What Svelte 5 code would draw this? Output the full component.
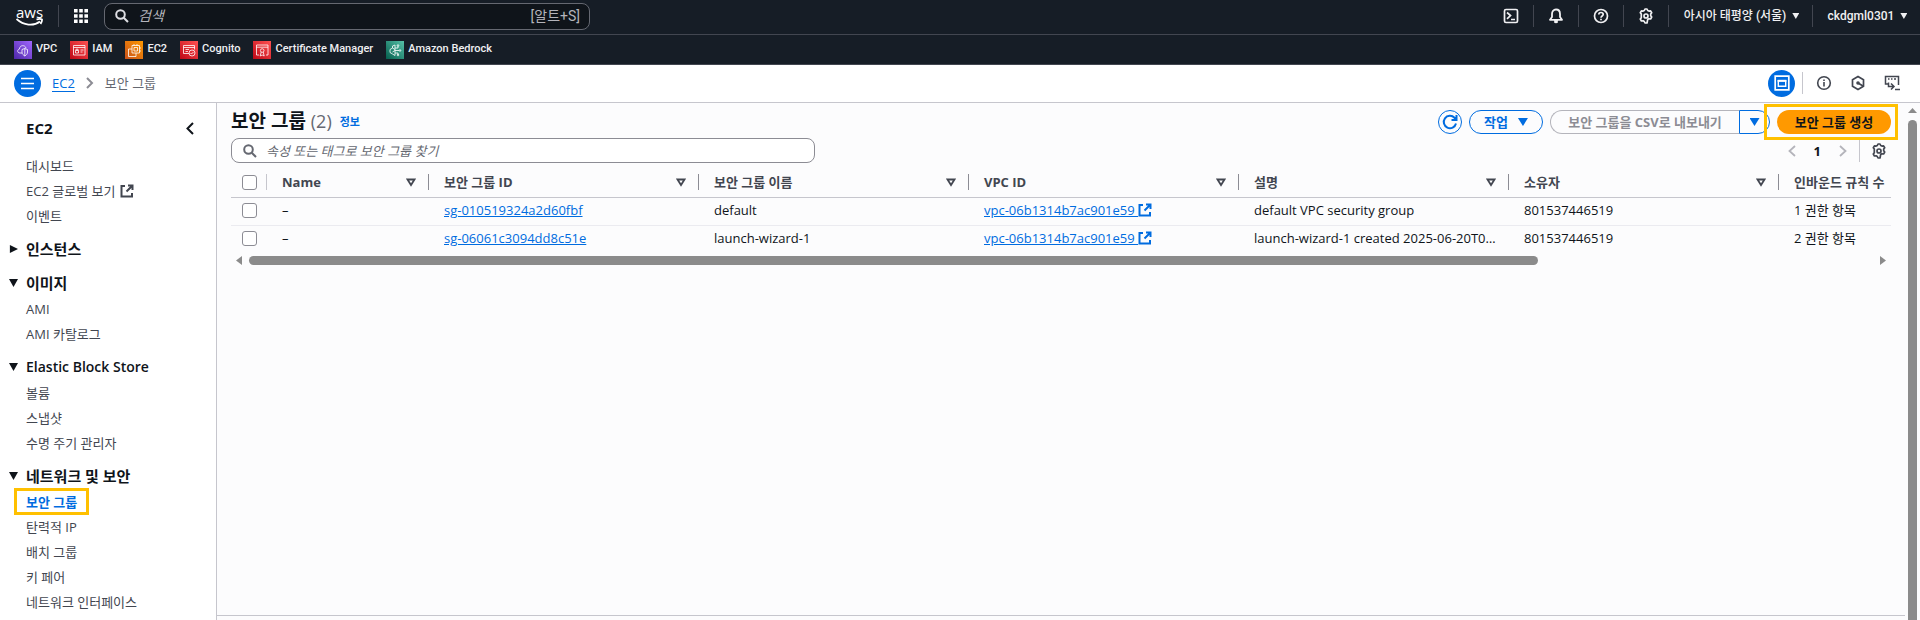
<script>
  const services = [
    { name: 'VPC', kind: 'vpc' },
    { name: 'IAM', kind: 'iam' },
    { name: 'EC2', kind: 'ec2' },
    { name: 'Cognito', kind: 'cognito' },
    { name: 'Certificate Manager', kind: 'cert' },
    { name: 'Amazon Bedrock', kind: 'bedrock' }
  ];
  const topItems = [
    { label: '대시보드' },
    { label: 'EC2 글로벌 보기', external: true },
    { label: '이벤트' }
  ];
  const sections = [
    { title: '인스턴스', lang: 'ko', open: false, items: [] },
    { title: '이미지', lang: 'ko', open: true, items: ['AMI', 'AMI 카탈로그'] },
    { title: 'Elastic Block Store', lang: 'en', open: true, items: ['볼륨', '스냅샷', '수명 주기 관리자'] },
    { title: '네트워크 및 보안', lang: 'ko', open: true, items: ['보안 그룹', '탄력적 IP', '배치 그룹', '키 페어', '네트워크 인터페이스'] }
  ];
  const columns = ['Name', '보안 그룹 ID', '보안 그룹 이름', 'VPC ID', '설명', '소유자'];
  const rows = [
    { id: 'sg-010519324a2d60fbf', name: 'default', vpc: 'vpc-06b1314b7ac901e59', desc: 'default VPC security group', owner: '801537446519', rules: '1 권한 항목' },
    { id: 'sg-06061c3094dd8c51e', name: 'launch-wizard-1', vpc: 'vpc-06b1314b7ac901e59', desc: 'launch-wizard-1 created 2025-06-20T0…', owner: '801537446519', rules: '2 권한 항목' }
  ];
</script>

{#snippet gear(size)}
  <svg width={size} height={size} viewBox="0 0 16 16" fill="none" stroke="currentColor" stroke-width="1.7" stroke-linejoin="round">
    <path d="M6.3 2.5 7 1h2l.7 1.5 1.2.6 1.700-.2 1.100 1.800-1 1.400v1.600l1 1.400-1.100 1.900-1.700-.2-1.200.7L9 15H7l-.7-1.500-1.200-.7-1.700.2-1.100-1.900 1-1.400V6.100l-1-1.400 1.100-1.800 1.700.2z" />
    <circle cx="8" cy="8" r="2" />
  </svg>
{/snippet}

{#snippet external()}
  <svg class="ext" width="14" height="14" viewBox="0 0 14 14" fill="none" stroke="currentColor" stroke-width="2">
    <path d="M5 2H1.500v10.500H12V9M8 1.500h4.500V6M12 2 6.500 7.500" />
  </svg>
{/snippet}

{#snippet magnifier()}
  <svg width="14" height="14" viewBox="0 0 14 14" fill="none" stroke="currentColor" stroke-width="2">
    <circle cx="5.500" cy="5.500" r="4.300" /><path d="m8.700 8.700 4.300 4.300" />
  </svg>
{/snippet}

<div class="page">
  <header>
    <div class="global">
      <a class="logo" href="#home" aria-label="AWS">
        <span>aws</span>
        <svg width="28" height="8" viewBox="0 0 28 8" fill="none" stroke="#fff" stroke-width="1.800"><path d="M.5 1c7 6.500 17 7.500 23.500 2.500M20.500 1.500c2.200-.7 4.500-.7 5.500 0 .2 1.500-.5 3-1.500 4.500" /></svg>
      </a>
      <button class="apps" aria-label="서비스">
        <svg width="14" height="14" viewBox="0 0 14 14" fill="#fff"><path d="M0 0h3.600v3.600H0zM5.200 0h3.600v3.600H5.200zM10.400 0H14v3.600h-3.600zM0 5.200h3.600v3.600H0zM5.200 5.200h3.600v3.600H5.200zM10.400 5.200H14v3.600h-3.600zM0 10.400h3.600V14H0zM5.200 10.400h3.600V14H5.200zM10.400 10.400H14V14h-3.600z" /></svg>
      </button>
      <label class="search dark">
        {@render magnifier()}
        <input type="text" placeholder="검색" aria-label="검색" />
        <span>[알트+S]</span>
      </label>
      <nav class="tools" aria-label="도구">
        <button class="tool" aria-label="CloudShell"><svg width="16" height="16" viewBox="0 0 16 16" fill="none" stroke="currentColor" stroke-width="1.700"><rect x="1.500" y="1.500" width="13" height="13" rx="1.500" /><path d="m4 4.500 3.500 3L4 10.800M8 11.500h4" /></svg></button>
        <button class="tool" aria-label="알림"><svg width="16" height="16" viewBox="0 0 16 16" fill="none" stroke="currentColor" stroke-width="1.800" stroke-linejoin="round"><path d="M2 11.800 4 9V6c0-2.500 1.500-4.500 4-4.500S12 3.500 12 6v3l2 2.800z" /><path d="M6 12h4c0 3.500-4 3.500-4 0z" fill="currentColor" stroke="none" /><path d="M6.500 13.500c1 1 2 1 3 0" /></svg></button>
        <button class="tool" aria-label="도움말"><svg width="16" height="16" viewBox="0 0 16 16" fill="none" stroke="currentColor" stroke-width="1.700"><circle cx="8" cy="8" r="6.500" /><path d="M5.800 6.500c0-2.700 4.400-2.700 4.400 0C10.200 8 8 8 8 9.700M8 10.800v1.500" /></svg></button>
        <button class="tool" aria-label="설정">{@render gear(16)}</button>
        <button class="region">아시아 태평양 (서울) <i class="tri"></i></button>
        <button class="user">ckdgml0301 <i class="tri"></i></button>
      </nav>
    </div>
    <nav class="favorites" aria-label="즐겨찾기">
      {#each services as s}
        <a href="#{s.kind}">
          <svg class="svc {s.kind}" width="18" height="18" viewBox="-1 0 18 18" fill="none" stroke="#fff" stroke-width="0.800">
            {#if s.kind === 'vpc'}
              <path d="M7 12H5C2 12 2 8.500 4.500 8 4.500 4 10 3.500 11 7" /><path d="M7 8.500 9.800 7.500l2.700 1v2.500c0 2-1.200 3-2.700 4-1.500-1-2.800-2-2.800-4zM9.800 7.500V15" />
            {:else if s.kind === 'iam'}
              <path d="M2.500 4.500h11.500v9.500H2.500zM2.500 6.500h11.500M9.500 9h3M9.500 11h2M4.500 9.500h3V12h-3zM5 9.500V8.200h2v1.300" />
            {:else if s.kind === 'ec2'}
              <path d="M6 4.500h7.500V12H6zM8 6.500h3.500V10H8zM8 4.500V3M11 4.500V3M6 8H2.500v7.500h7.500V12M13.500 7H15M13.500 10H15" />
            {:else if s.kind === 'cognito'}
              <path d="M8 12.500H2.500v-8h11v4M2.500 6.500h11M4.500 8.500h3.500M4.500 10.500h2.500" /><circle cx="11" cy="12" r="3" /><path d="m9.500 12 1 1 2-2" />
            {:else if s.kind === 'cert'}
              <path d="M5 14H2.500V4h11.500v10H12M2.500 6.200h11.500" /><circle cx="8.200" cy="9.500" r="1.800" /><path d="m7.200 11-1 4 2-1 2 1-1-4" />
            {:else}
              <path d="M8 4 5.500 5v2L3 8.500v3L5.500 13l2.500 1.500zM5.500 7 8 8.500M5.500 11 8 9.500M8 7h3V5M8 9.500h4M8 12h3v2" /><circle cx="11" cy="4.500" r=".8" /><circle cx="13" cy="9.500" r=".8" /><circle cx="11" cy="14" r=".8" />
            {/if}
          </svg>
          <span>{s.name}</span>
        </a>
      {/each}
    </nav>
  </header>

  <div class="crumbs">
    <button class="menu" aria-label="메뉴"><svg width="13" height="13" viewBox="0 0 13 13" stroke="#fff" stroke-width="1.600"><path d="M0 1.500h13M0 6.500h13M0 11.500h13" /></svg></button>
    <nav class="trail" aria-label="경로">
      <a href="#ec2">EC2</a>
      <svg width="8" height="12" viewBox="0 0 8 12" fill="none" stroke="#8c8c94" stroke-width="2"><path d="m1 1 5 5-5 5" /></svg>
      <span>보안 그룹</span>
    </nav>
    <div class="panels">
      <button class="split" aria-label="분할 패널"><svg width="16" height="16" viewBox="0 0 16 16" fill="none" stroke="#fff" stroke-width="1.700"><path d="M1.200 1.200h13.600v13.600H1.200z" /><path d="M4.300 5.800h7.400v5.400H4.300z" stroke-width="1.400" /><path d="M3.600 5.800h8.800" stroke-width="2" /></svg></button>
      <button aria-label="정보"><svg width="16" height="16" viewBox="0 0 16 16" fill="none" stroke="currentColor" stroke-width="1.600"><circle cx="8" cy="8" r="6.300" /><path d="M8 7v4.500M8 4.500V6" /></svg></button>
      <button aria-label="Q"><svg width="16" height="16" viewBox="0 0 16 16" fill="none" stroke="currentColor" stroke-width="1.700"><path d="m8 1.600 5.500 3.200v6.400L8 14.400l-5.500-3.200V4.800z" /><path d="m8 8 5 3" /><circle cx="8" cy="8" r="1.800" fill="currentColor" stroke="none" /></svg></button>
      <button aria-label="콘솔"><svg width="16" height="16" viewBox="0 0 16 16" fill="none" stroke="currentColor" stroke-width="1.500"><path d="M4 9H1.500V1.500h13V10M4 4h1.500M7 4h1.500M10 4h2M4.500 7.500v4h5M7 8.500l3 3-3 3M11 14.500h5" /></svg></button>
    </div>
  </div>

  <div class="body">
    <aside>
      <div class="side-title"><h2>EC2</h2><button aria-label="닫기"><svg width="8" height="13" viewBox="0 0 8 13" fill="none" stroke="#0f141a" stroke-width="2"><path d="M7 1 1.500 6.500 7 12" /></svg></button></div>
      <ul class="first">
        {#each topItems as t}
          <li><a href="#{t.label}">{t.label}{#if t.external}{@render external()}{/if}</a></li>
        {/each}
      </ul>
      {#each sections as s}
        <section>
          <button class="fold" lang={s.lang} aria-expanded={s.open}><i class:open={s.open}></i>{s.title}</button>
          {#if s.open}
            <ul>
              {#each s.items as item}
                <li><a href="#{item}" class:current={item === '보안 그룹'}>{item}</a></li>
              {/each}
            </ul>
          {/if}
        </section>
      {/each}
    </aside>

    <main>
      <div class="content">
        <div class="heading">
          <h1>보안 그룹 <span>(2)</span></h1>
          <a href="#info">정보</a>
          <div class="actions">
            <button class="round" aria-label="새로 고침"><svg width="16" height="16" viewBox="0 0 16 16" fill="none" stroke="currentColor" stroke-width="2"><path d="M14 9.500A6.200 6.200 0 1 1 12.500 3.800L14.500 6M14.500 1v5h-5" /></svg></button>
            <button class="pill">작업 <i class="tri big"></i></button>
            <div class="group"><button class="export" disabled>보안 그룹을 CSV로 내보내기</button><button class="more" aria-label="내보내기 옵션"><i class="tri big"></i></button></div>
            <div class="mark"><button class="create">보안 그룹 생성</button></div>
          </div>
        </div>
        <div class="filter">
          <label class="search light">
            {@render magnifier()}
            <input type="text" placeholder="속성 또는 태그로 보안 그룹 찾기" aria-label="보안 그룹 찾기" />
          </label>
          <div class="pager">
            <button aria-label="이전"><svg width="8" height="12" viewBox="0 0 8 12" fill="none" stroke="#b4b4bb" stroke-width="1.800"><path d="M7 1 1.500 6 7 11" /></svg></button>
            <b>1</b>
            <button aria-label="다음"><svg width="8" height="12" viewBox="0 0 8 12" fill="none" stroke="#b4b4bb" stroke-width="1.800"><path d="m1 1 5.500 5L1 11" /></svg></button>
            <button class="prefs" aria-label="기본 설정">{@render gear(16)}</button>
          </div>
        </div>
        <table>
          <thead>
            <tr>
              <th class="pick"><div><input type="checkbox" aria-label="모두 선택" /></div></th>
              {#each columns as c, i}
                <th class:name={i === 0} class:wide={i > 0}><div>{c}<svg width="10" height="9" viewBox="0 0 10 9" fill="none" stroke="currentColor" stroke-width="1.800"><path d="M1.500 1.500h7L5 7z" /></svg></div></th>
              {/each}
              <th class="last"><div>인바운드 규칙 수</div></th>
            </tr>
          </thead>
          <tbody>
            {#each rows as r}
              <tr>
                <td class="pick"><input type="checkbox" aria-label={r.id} /></td>
                <td>–</td>
                <td><a href="#{r.id}">{r.id}</a></td>
                <td>{r.name}</td>
                <td><a href="#{r.vpc}">{r.vpc} {@render external()}</a></td>
                <td>{r.desc}</td>
                <td>{r.owner}</td>
                <td>{r.rules}</td>
              </tr>
            {/each}
          </tbody>
        </table>
        <div class="hscroll"><i class="left"></i><div><span></span></div><i class="right"></i></div>
      </div>
      <div class="vscroll"><i></i><span></span></div>
    </main>
  </div>
</div>

<style>
  :global(body) { margin: 0; background: #fcfcfd; }
  .page { display: flex; flex-direction: column; height: 100vh; overflow: hidden; font: 13px/20px 'Open Sans', 'Noto Sans CJK KR', sans-serif; color: #0f141a; background: #fcfcfd; }
  .page :global(*) { box-sizing: border-box; }
  svg { flex: none; display: block; }
  button { font: inherit; color: inherit; background: none; border: 0; padding: 0; margin: 0; display: flex; align-items: center; justify-content: center; cursor: pointer; }
  input { font: inherit; color: inherit; }
  ul { list-style: none; margin: 0; padding: 0; }
  h1, h2 { margin: 0; }
  .tri { width: 7px; height: 6px; background: currentColor; clip-path: polygon(0 0, 100% 0, 50% 100%); }
  .tri.big { width: 10px; height: 8px; }

  header { background: #161d26; color: #f0f0f2; font: 12px/20px Roboto, 'Noto Sans CJK KR', sans-serif; flex: none; border-bottom: 1px solid #424650; }
  .global { height: 35px; display: flex; align-items: center; border-bottom: 1px solid #424650; padding-bottom: 2px; }
  .logo { width: 59px; height: 22px; border-right: 1px solid #424650; padding-left: 16px; color: #fff; text-decoration: none; display: flex; flex-direction: column; justify-content: center; }
  .logo span { font: 500 15px/12px 'Open Sans', sans-serif; }
  .apps { width: 44px; }
  .search { display: flex; align-items: center; border-radius: 8px; }
  .search input { flex: 1; min-width: 0; border: 0; outline: 0; background: none; padding: 0; }
  .search input::placeholder { font-style: italic; opacity: 1; color: inherit; }
  .dark { width: 486px; height: 27px; margin-left: 1px; border: 1px solid #656871; background: #0f141a; padding: 0 9px 0 10px; gap: 9px; color: #b4b4bb; font-size: 14px; }
  .dark svg { color: #dedee3; }
  .tools { margin-left: auto; display: flex; align-items: center; font-weight: 500; }
  .tools button + button { border-left: 1px solid #424650; }
  .tools button { height: 22px; gap: 6px; }
  .tool { width: 45px; }
  .region { width: 144px; }
  .user { width: 108px; }
  .tools .user, .tools .region { padding-left: 2px; }
  .favorites { height: 29px; display: flex; align-items: center; padding-left: 14px; gap: 13px; font-size: 11px; font-weight: 500; }
  .favorites a { display: flex; align-items: center; gap: 4px; color: inherit; text-decoration: none; line-height: 16px; }
  .favorites span { padding-bottom: 2px; }
  .svc { background: linear-gradient(45deg, #bd0816, #ff5252); }
  .svc.vpc { background: linear-gradient(45deg, #4d27a8, #a166ff); }
  .svc.ec2 { background: linear-gradient(45deg, #c8511b, #ff9900); }
  .svc.bedrock { background: linear-gradient(45deg, #055f4e, #56c0a7); }

  .crumbs { flex: none; height: 38px; background: #fff; border-bottom: 1px solid #c6c6cd; display: flex; align-items: center; padding: 0 20px 1px 14px; }
  .menu, .split { width: 27px; height: 27px; border-radius: 50%; background: #006ce0; }
  .trail { display: flex; align-items: center; gap: 11px; margin-left: 11px; color: #656871; }
  .trail a { color: #006ce0; line-height: 16px; border-bottom: 1px solid; }
  .trail a, aside a, .heading a { text-decoration: none; }
  .panels { margin-left: auto; display: flex; align-items: center; gap: 18px; color: #424650; }
  .panels .split + button { border-left: 1px solid #c6c6cd; height: 22px; padding-left: 13px; margin-left: -11px; }

  .body { flex: 1; min-height: 0; display: flex; }
  aside { width: 217px; flex: none; background: #fff; border-right: 1px solid #c6c6cd; padding-top: 14px; }
  .side-title { display: flex; justify-content: space-between; align-items: center; padding: 0 22px 0 26px; }
  .side-title h2 { font-size: 15px; line-height: 22px; }
  .first { margin: 14px 0 8px; }
  li { height: 25px; padding-left: 26px; display: flex; align-items: center; }
  aside a { color: #424650; display: flex; align-items: center; gap: 5px; }
  section { padding-bottom: 8px; }
  .fold { height: 26px; font-size: 14px; font-weight: 600; gap: 8px; padding-left: 9px; }
  .fold:lang(ko) { font-size: 15px; font-weight: 700; }
  .fold i { width: 9px; height: 8px; background: #0f141a; clip-path: polygon(10% 0, 100% 50%, 10% 100%); }
  .fold i.open { clip-path: polygon(0 0, 100% 0, 50% 100%); }
  a.current { color: #006ce0; font-weight: 700; outline: 3px solid #ffc000; padding: 0 9px; margin-left: -9px; height: 21px; }

  main { flex: 1; min-width: 0; display: flex; }
  .content { flex: 1; min-width: 0; padding: 5px 14px 0; border-bottom: 1px solid #c6c6cd; margin-bottom: 4px; }
  .heading { display: flex; align-items: center; height: 28px; }
  h1 { font-size: 19px; line-height: 24px; font-weight: 700; padding-bottom: 2px; }
  h1 span { font-weight: 400; color: #656871; font-size: 18px; }
  .heading > a { color: #006ce0; font-size: 11px; font-weight: 700; margin-left: 8px; }
  .actions { margin-left: auto; display: flex; align-items: center; gap: 7px; font-weight: 700; color: #006ce0; }
  .actions button { height: 24px; }
  .actions .round { width: 24px; border: 1px solid; border-radius: 50%; }
  .pill { width: 74px; border: 1px solid; border-radius: 12px; gap: 10px; }
  .group { display: flex; }
  .group .export { width: 189px; border: 1px solid #b4b4bb; border-right: 0; border-radius: 12px 0 0 12px; color: #8c8c94; }
  .group .more { width: 31px; border: 1px solid; border-radius: 0 12px 12px 0; }
  .mark { outline: 3px solid #ffc000; padding: 3px 4px 3px 10px; margin: 0 -4px 0 -10px; }
  .create { width: 114px; border-radius: 12px; background: #f90; color: #0f141a; }
  .filter { display: flex; align-items: center; margin-top: 2px; }
  .light { width: 584px; height: 25px; border: 1px solid #8c8c94; background: #fff; color: #656871; padding: 0 11px; gap: 9px; }
  .pager { margin-left: auto; display: flex; align-items: center; height: 22px; gap: 18px; }
  .prefs { border-left: 1px solid #c6c6cd; height: 22px; padding: 0 4px 0 11px; margin-left: -6px; color: #424650; }
  table { width: 100%; table-layout: fixed; border-collapse: collapse; margin-top: 5px; }
  th, td { text-align: left; padding: 0 0 0 16px; height: 28px; white-space: nowrap; }
  td { padding-bottom: 2px; }
  tr { border-bottom: 1px solid #ebebf0; }
  thead tr { border-color: #c6c6cd; }
  tbody tr:last-child { border: 0; }
  th { color: #424650; height: 29px; font-weight: 700; }
  th div { display: flex; justify-content: space-between; align-items: center; height: 16px; margin-right: -1px; padding-right: 12px; border-right: 1px solid #8c8c94; }
  th.last div { border: 0; padding: 0; }
  .name { width: 162px; }
  .wide { width: 270px; }
  .pick { width: 35px; padding-left: 11px; }
  th.pick div { padding: 0; border-color: #c6c6cd; }
  .pick input { appearance: none; display: block; width: 15px; height: 15px; margin: 0; border: 1px solid #8c8c94; border-radius: 3px; background: #fff; }
  td a { color: #006ce0; }
  td :global(.ext) { display: inline-block; vertical-align: -2px; }
  .hscroll { display: flex; align-items: center; height: 9px; gap: 7px; padding: 0 5px; margin-top: 3px; }
  .hscroll div { flex: 1; }
  .hscroll span { display: block; width: 79.4%; height: 9px; border-radius: 5px; background: #8b8b8b; }
  .hscroll i { width: 6px; height: 9px; background: #8b8b8b; clip-path: polygon(0 50%, 100% 0, 100% 100%); }
  .hscroll .right { clip-path: polygon(0 0, 100% 50%, 0 100%); }
  .vscroll { width: 15px; flex: none; display: flex; flex-direction: column; align-items: center; padding-top: 5px; gap: 7px; }
  .vscroll i { width: 9px; height: 5px; background: #8b8b8b; clip-path: polygon(50% 0, 100% 100%, 0 100%); }
  .vscroll span { width: 9px; flex: 1; border-radius: 5px 5px 0 0; background: #8b8b8b; }
</style>
